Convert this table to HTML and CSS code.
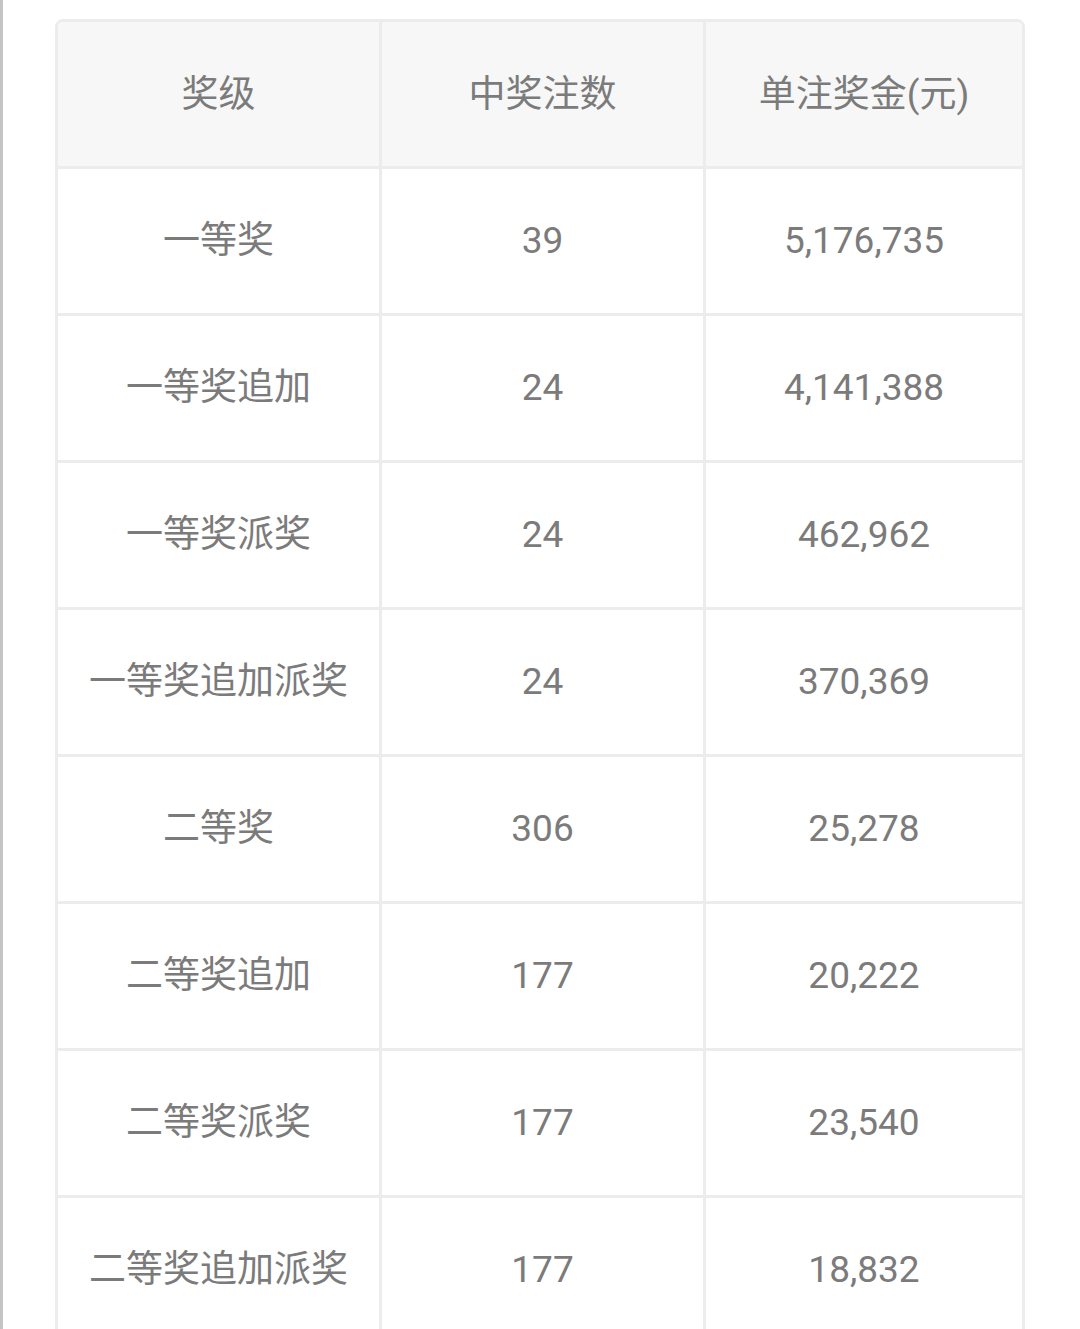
FILE: index.html
```html
<!DOCTYPE html>
<html lang="zh">
<head>
<meta charset="utf-8">
<link rel="stylesheet" href="styles.css">
</head>
<body>
<div class="page">
  <table class="prize">
    <thead>
      <tr><th>奖级</th><th>中奖注数</th><th>单注奖金(元)</th></tr>
    </thead>
    <tbody>
      <tr><td>一等奖</td><td>39</td><td>5,176,735</td></tr>
      <tr><td>一等奖追加</td><td>24</td><td>4,141,388</td></tr>
      <tr><td>一等奖派奖</td><td>24</td><td>462,962</td></tr>
      <tr><td>一等奖追加派奖</td><td>24</td><td>370,369</td></tr>
      <tr><td>二等奖</td><td>306</td><td>25,278</td></tr>
      <tr><td>二等奖追加</td><td>177</td><td>20,222</td></tr>
      <tr><td>二等奖派奖</td><td>177</td><td>23,540</td></tr>
      <tr><td>二等奖追加派奖</td><td>177</td><td>18,832</td></tr>
    </tbody>
  </table>
</div>
</body>
</html>
```
FILE: styles.css
```css
html, body {
  margin: 0;
  padding: 0;
  background: #ffffff;
}
.page {
  border-left: 3px solid #c4c4c4;
  padding: 19px 0 0 52px;
  box-sizing: border-box;
  overflow: hidden;
  height: 1329px;
}
.prize {
  width: 970px;
  border-collapse: separate;
  border-spacing: 0;
  border: 3px solid #ececec;
  border-radius: 8px;
  font-family: Roboto, "Noto Sans CJK SC", sans-serif;
  font-size: 37px;
  line-height: 1.2;
  color: #7b7b7b;
  table-layout: fixed;
}
.prize th, .prize td {
  padding: 0;
  text-align: center;
  vertical-align: middle;
  font-weight: 400;
  border-right: 3px solid #ececec;
  border-bottom: 3px solid #ececec;
  box-sizing: border-box;
}
.prize th:first-child, .prize td:first-child { width: 324px; }
.prize th:nth-child(2), .prize td:nth-child(2) { width: 324px; }
.prize th:last-child, .prize td:last-child { border-right: none; }
.prize thead th {
  background: #f7f7f7;
  height: 147px;
  padding-top: 3px;
}
.prize thead th:first-child { border-top-left-radius: 6px; }
.prize thead th:last-child { border-top-right-radius: 6px; }
.prize tbody td { height: 147px; }
```
